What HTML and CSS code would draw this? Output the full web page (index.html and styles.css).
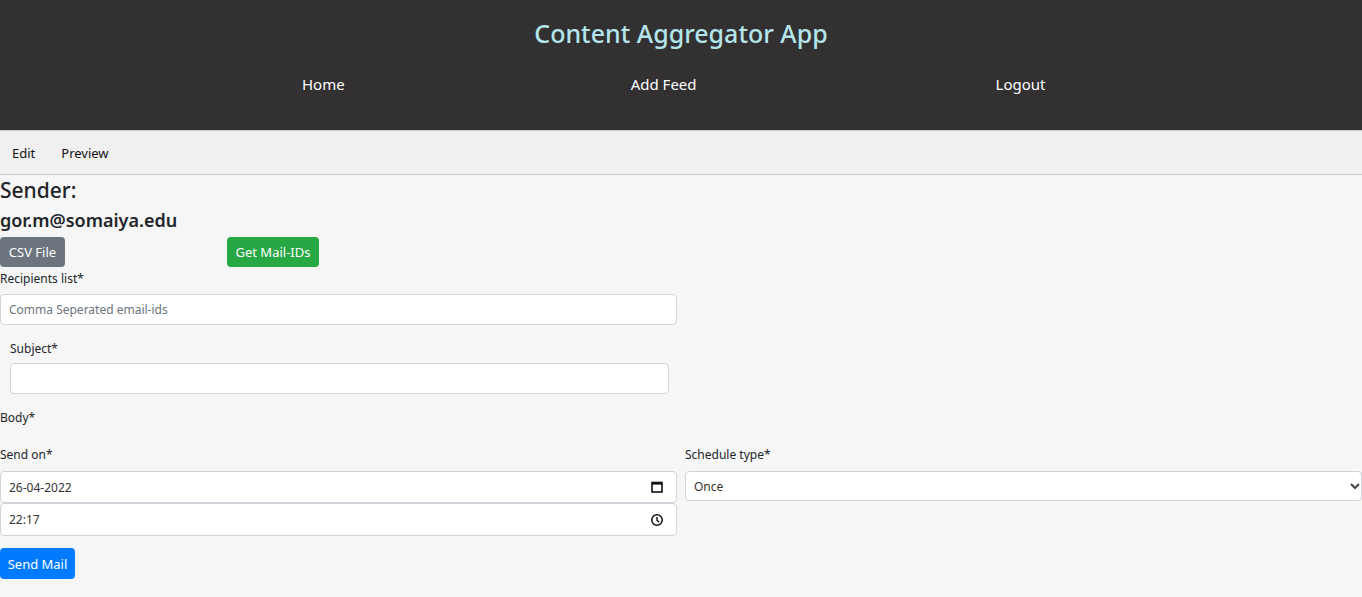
FILE: index.html
```html
<!DOCTYPE html>
<html>
<head>
<meta charset="utf-8">
<link rel="stylesheet" href="styles.css">
</head>
<body>
<header class="topbar">
  <h1 class="title">Content Aggregator App</h1>
  <nav class="nav">
    <a class="nav-link home">Home</a>
    <a class="nav-link feed">Add Feed</a>
    <a class="nav-link logout">Logout</a>
  </nav>
</header>
<div class="tabs">
  <span class="tab">Edit</span>
  <span class="tab">Preview</span>
</div>
<main class="content">
  <h2 class="sender">Sender:</h2>
  <h3 class="email">gor.m@somaiya.edu</h3>
  <div class="btn-row">
    <button class="btn btn-gray">CSV File</button>
    <button class="btn btn-green">Get Mail-IDs</button>
  </div>
  <label class="label">Recipients list*</label>
  <div class="field-wide"><input class="input" type="text" placeholder="Comma Seperated email-ids"></div>
  <div class="subject">
    <label class="label">Subject*</label>
    <input class="input" type="text">
  </div>
  <label class="label body-label">Body*</label>
  <div class="schedule">
    <div class="col">
      <label class="label">Send on*</label>
      <div class="input fake">
        <span>26-04-2022</span>
        <svg width="14" height="14" viewBox="0 0 14 14"><rect x="2" y="2.5" width="10" height="9.5" fill="none" stroke="#111" stroke-width="1.6"/><rect x="2" y="2" width="10" height="2.6" fill="#111"/></svg>
      </div>
      <div class="input fake">
        <span>22:17</span>
        <svg width="14" height="14" viewBox="0 0 14 14"><circle cx="7" cy="7" r="5.2" fill="none" stroke="#111" stroke-width="1.5"/><path d="M7 4v3.3l2.2 2" fill="none" stroke="#111" stroke-width="1.4"/></svg>
      </div>
    </div>
    <div class="col">
      <label class="label">Schedule type*</label>
      <div class="input fake select">
        <span>Once</span>
        <svg width="12" height="12" viewBox="0 0 12 12"><path d="M2 4l4 4 4-4" fill="none" stroke="#444" stroke-width="2"/></svg>
      </div>
    </div>
  </div>
  <button class="btn btn-blue">Send Mail</button>
</main>
</body>
</html>
```

FILE: styles.css
```css
html, body {
  margin: 0;
  padding: 0;
}
body {
  background: #f6f6f6;
  font-family: "Noto Sans", "Open Sans", sans-serif;
  color: #212529;
  height: 597px;
  overflow: hidden;
}
.topbar {
  background: #323031;
  height: 130px;
  box-sizing: border-box;
  padding-top: 13px;
}
.title {
  margin: 0;
  text-align: center;
  color: #b3e5ea;
  font-size: 25px;
  font-weight: 500;
  line-height: 40px;
}
.nav {
  display: flex;
  padding-left: 302px;
  margin-top: 20px;
}
.nav-link {
  color: #ffffff;
  font-size: 15px;
  line-height: 22px;
}
.feed { margin-left: 286px; }
.logout { margin-left: 299px; }
.tabs {
  background: #f0f0f0;
  border-top: 1px solid #c8c8c8;
  border-bottom: 1px solid #c8c8c8;
  height: 43px;
  display: flex;
  align-items: center;
  padding-left: 12px;
  gap: 26px;
  font-size: 13px;
  color: #111;
}
.content {
  padding: 0;
}
.sender {
  margin: 2px 0 0 0;
  font-size: 21px;
  font-weight: 500;
  line-height: 26px;
}
.email {
  margin: 4px 0 0 0;
  font-size: 18px;
  font-weight: 600;
  line-height: 26px;
}
.btn-row {
  display: flex;
  gap: 162px;
  margin-top: 4px;
}
.btn {
  border: none;
  border-radius: 4px;
  color: #fff;
  font-family: inherit;
  font-size: 13px;
  height: 30px;
  padding: 0;
  display: block;
  white-space: nowrap;
  text-align: center;
}
.btn-gray { background: #6c757d; width: 65px; }
.btn-green { background: #28a745; width: 92px; }
.btn-blue { background: #007bff; width: 75px; height: 31px; margin-top: 12px; }
.label {
  display: block;
  font-size: 12px;
  line-height: 18px;
  color: #212529;
}
.btn-row + .label { margin-top: 3px; }
.input {
  display: block;
  box-sizing: border-box;
  width: 677px;
  height: 31px;
  border: 1px solid #ced4da;
  border-radius: 4px;
  background: #fff;
  font-family: inherit;
  font-size: 12px;
  padding: 0 8px;
  color: #495057;
  outline: none;
}
.input::placeholder { color: #6c757d; }
.field-wide { margin-top: 6px; }
.subject {
  padding-left: 10px;
  margin-top: 15px;
}
.subject .input {
  width: 659px;
  margin-top: 5px;
}
.body-label { margin-top: 15px; }
.schedule {
  display: flex;
  gap: 8px;
  margin-top: 19px;
}
.col { display: flex; flex-direction: column; }
.col .label { margin-bottom: 7px; }
.fake {
  display: flex;
  align-items: center;
  justify-content: space-between;
  padding: 0 12px 0 8px;
  color: #333;
  height: 32px;
}
.fake + .fake { height: 33px; }
.select {
  width: 677px;
  height: 30px;
  padding: 0 0 0 8px;
}
```
